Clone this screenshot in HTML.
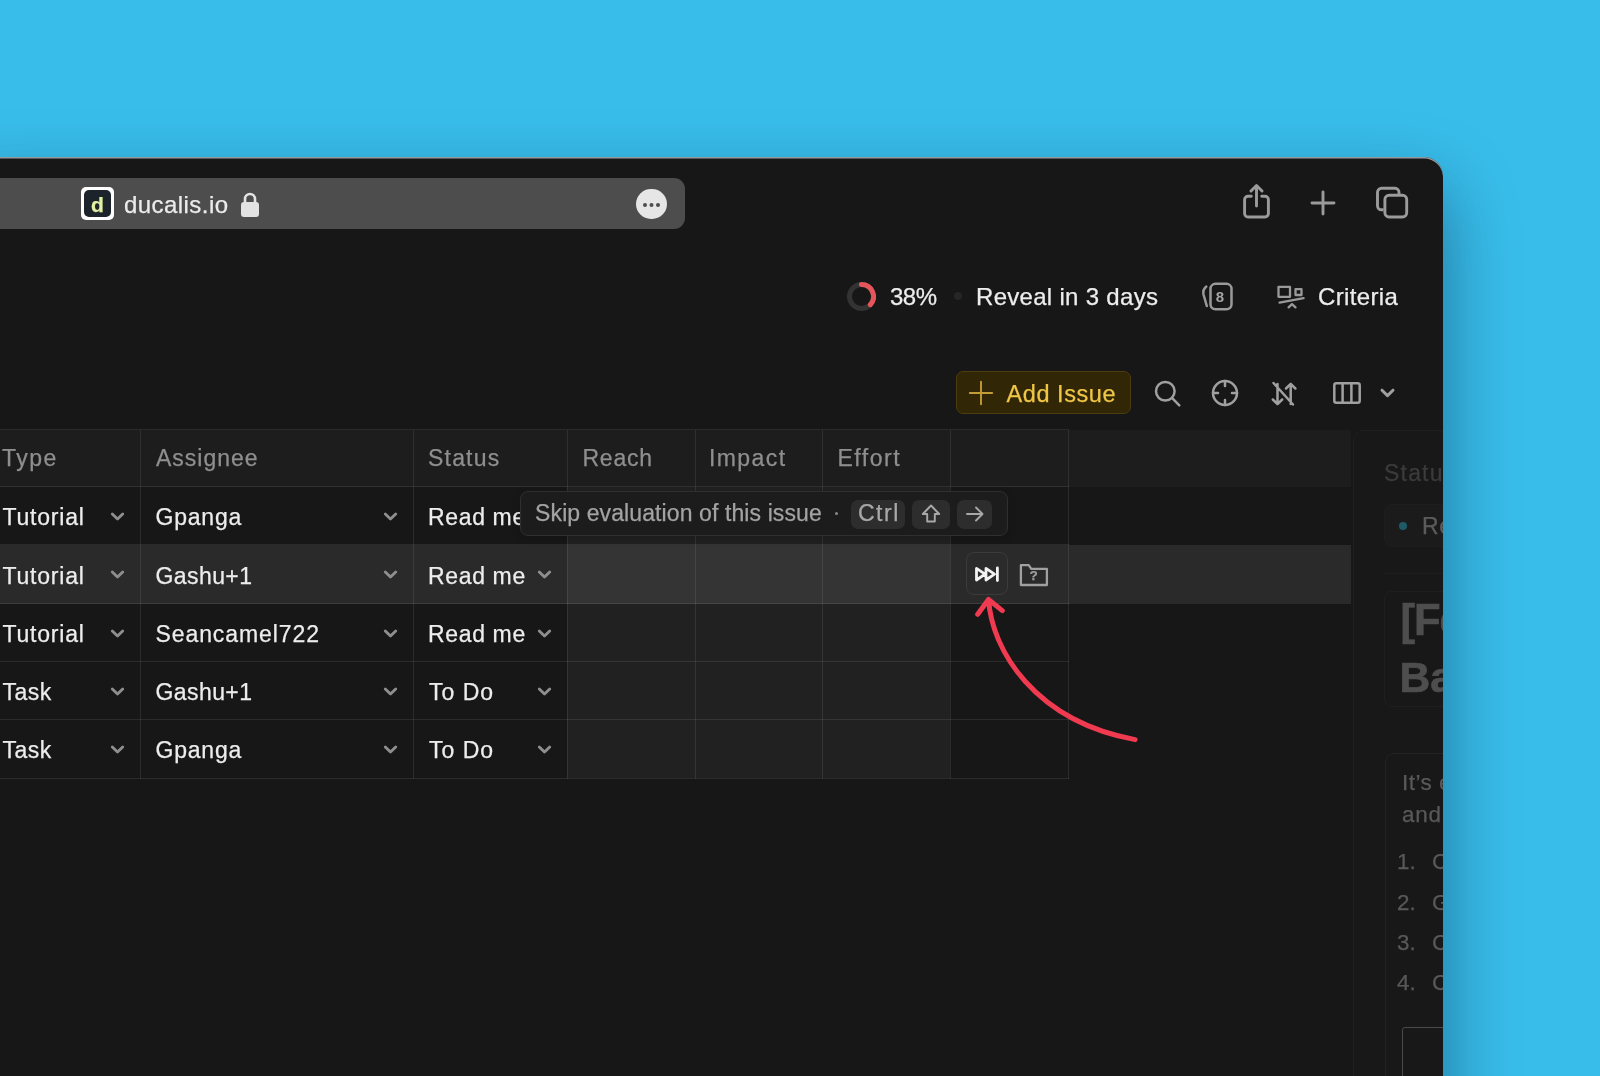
<!DOCTYPE html>
<html lang="en">
<head>
<meta charset="utf-8">
<title>Ducalis – Skip evaluation</title>
<style>
*{box-sizing:border-box;margin:0;padding:0}
html,body{width:1600px;height:1076px;overflow:hidden}
body{background:#38bdea;font-family:"Liberation Sans",Arial,sans-serif;position:relative;color:#ededed}
.abs{position:absolute}
#win{position:absolute;left:-40px;top:157px;width:1483px;height:1000px;background:#171717;border-top-right-radius:19px;
 box-shadow:0 32px 70px 2px rgba(0,20,50,.42), inset 0 1.500px 0 rgba(170,178,184,.85);overflow:hidden}
#inner{position:absolute;left:40px;top:-157px;width:1443px;height:1076px;will-change:transform}
.t{position:absolute;white-space:nowrap;line-height:1;-webkit-text-stroke:.25px currentColor}
svg{position:absolute;overflow:visible}
.th{font-size:23px;color:#8f8f8f}
.pl{font-size:22.400px;color:#595959}
.td{font-size:23px;color:#ededed}
</style>
</head>
<body>
<div id="win"><div id="inner">
<!-- URL BAR -->
<div class="abs" style="left:-20px;top:178px;width:705px;height:51px;background:#4d4d4d;border-radius:11px"></div>
<div class="abs" style="left:81px;top:187px;width:33px;height:33px;background:#fff;border-radius:5px"></div>
<div class="abs" style="left:84px;top:190px;width:27px;height:27px;background:#1d232b;border-radius:5px"></div>
<div class="t" id="fav" style="left:91px;top:193.500px;font-size:21px;font-weight:bold;color:#e3f0a3">d</div>
<div class="t" id="url" style="left:124px;top:192.600px;font-size:24px;color:#ececec;letter-spacing:0.44px">ducalis.io</div>
<svg style="left:240px;top:191px" width="20" height="27" viewBox="0 0 20 27"><path d="M5 12V8a5 5 0 0 1 10 0v4" fill="none" stroke="#e3e3e3" stroke-width="2.6"/><rect x="1" y="11" width="18" height="15" rx="3" fill="#e3e3e3"/></svg>
<div class="abs" style="left:636.400px;top:188.800px;width:30.700px;height:30.700px;border-radius:50%;background:#e6e6e6"></div>
<div class="abs" style="left:643px;top:202.5px;width:4px;height:4px;border-radius:50%;background:#4d4d4d;box-shadow:6.5px 0 0 #4d4d4d,13px 0 0 #4d4d4d"></div>
<!-- top right icons -->
<svg style="left:1240px;top:182px" width="34" height="40" viewBox="0 0 34 40" fill="none" stroke="#9b9b9b" stroke-width="2.900" stroke-linecap="round" stroke-linejoin="round"><path d="M11.300 14.200H8a3.400 3.400 0 0 0-3.400 3.400v14a3.400 3.400 0 0 0 3.400 3.400h17a3.400 3.400 0 0 0 3.400-3.400v-14a3.400 3.400 0 0 0-3.400-3.400H21.700"/><path d="M16.500 24V3.600M11 9 16.500 3.500 22 9"/></svg>
<svg style="left:1309px;top:188.600px" width="28" height="28" viewBox="0 0 28 28" fill="none" stroke="#9b9b9b" stroke-width="2.900" stroke-linecap="round"><path d="M14 3v22M3 14h22"/></svg>
<svg style="left:1375px;top:186px" width="34" height="34" viewBox="0 0 34 34" fill="none" stroke="#9b9b9b" stroke-width="2.900" stroke-linejoin="round"><path d="M8.500 23.800H6.500a4 4 0 0 1-4-4V6.300a4 4 0 0 1 4-4h13.500a4 4 0 0 1 4 4v2.200"/><rect x="9.900" y="9.200" width="21.800" height="21.800" rx="4.200" fill="#171717"/></svg>
<!-- ROW 2 : progress / reveal / criteria -->
<svg style="left:846px;top:281px" width="31" height="31" viewBox="0 0 31 31" fill="none"><circle cx="15.5" cy="15.500" r="12" stroke="#333" stroke-width="5"/><path d="M15.500 3.500A12 12 0 0 1 24.250 23.710" stroke="#e5565c" stroke-width="5" stroke-linecap="round"/></svg>
<div class="t" id="pct" style="left:890px;top:284.700px;font-size:24px;color:#ededed;letter-spacing:-0.50px">38%</div>
<div class="abs" style="left:953.500px;top:292px;width:8px;height:8px;border-radius:50%;background:#262626"></div>
<div class="t" id="rev" style="left:976px;top:284.700px;font-size:24px;color:#ededed;letter-spacing:0.30px">Reveal in 3 days</div>
<svg style="left:1200px;top:280px" width="36" height="34" viewBox="0 0 36 34" fill="none" stroke="#9a9a9a" stroke-width="2.500" stroke-linecap="round" stroke-linejoin="round"><rect x="10.500" y="3.800" width="21" height="25.500" rx="5"/><path d="M6.300 6.500C3.200 9 2.800 11 3.500 14.500L6.800 26"/></svg>
<div class="t" style="left:1215.8px;top:289.300px;font-size:15px;font-weight:bold;color:#a5a5a5;-webkit-text-stroke:0">8</div>
<svg style="left:1276px;top:284px" width="30" height="26" viewBox="0 0 30 26" fill="none" stroke="#9a9a9a" stroke-width="2.300" stroke-linecap="round" stroke-linejoin="round"><rect x="2.500" y="2.800" width="11.500" height="10"/><rect x="19.500" y="5.200" width="6" height="5.800"/><path d="M3.500 18.600 27.600 14.200M12.600 23.400 16 20.200l3.500 3.200"/></svg>
<div class="t" id="crit" style="left:1318px;top:284.700px;font-size:24px;color:#ededed;letter-spacing:0.35px">Criteria</div>
<!-- ROW 3 : toolbar -->
<div class="abs" style="left:955.500px;top:370.800px;width:175px;height:43.600px;background:#312606;border:1px solid #4d3c0e;border-radius:7px"></div>
<svg style="left:969px;top:381px" width="24" height="24" viewBox="0 0 24 24" fill="none" stroke="#c29c36" stroke-width="1.900" stroke-linecap="round"><path d="M12 .8v22.400M.8 12h22.400"/></svg>
<div class="t" id="add" style="left:1006.5px;top:383px;font-size:23.500px;color:#f0c647;letter-spacing:0.57px">Add Issue</div>
<svg style="left:1153px;top:379px" width="30" height="30" viewBox="0 0 30 30" fill="none" stroke="#a0a0a0" stroke-width="2.500" stroke-linecap="round"><circle cx="12.300" cy="12.300" r="9.300"/><path d="M19.200 19.200 26.300 26.300"/></svg>
<svg style="left:1211px;top:379px" width="28" height="28" viewBox="0 0 28 28" fill="none" stroke="#a0a0a0" stroke-width="2.500" stroke-linecap="round"><circle cx="14" cy="14" r="12"/><path d="M14 2v5M14 21v5M2 14h5M21 14h5"/></svg>
<svg style="left:1270px;top:380px" width="28" height="28" viewBox="0 0 28 28" fill="none" stroke="#a0a0a0" stroke-width="2.500" stroke-linecap="round" stroke-linejoin="round"><path d="M7.500 4v20M2.800 19.500l4.700 4.700 4.700-4.700M20.700 24V4M16 8.500l4.700-4.700 4.700 4.700M3.500 3 23 24.500"/></svg>
<svg style="left:1332px;top:381px" width="30" height="24" viewBox="0 0 30 24" fill="none" stroke="#a0a0a0" stroke-width="2.500" stroke-linejoin="round"><rect x="2.300" y="2.300" width="25.400" height="19.400" rx="2"/><path d="M10.600 2.300v19.400M19.400 2.300v19.400"/></svg>
<svg style="left:1380px;top:388px" width="15" height="10" viewBox="0 0 15 10" fill="none" stroke="#a0a0a0" stroke-width="3" stroke-linecap="round" stroke-linejoin="round"><path d="M2 2.200 7.500 7.600 13 2.200"/></svg>
<!-- TABLE -->
<div class="abs" style="left:-10px;top:429.500px;width:1361px;height:57.700px;background:#1d1d1d"></div>
<div class="abs" style="left:-10px;top:545.400px;width:1361px;height:58.400px;background:#2a2a2a"></div>
<div class="abs" style="left:567.300px;top:487.2px;width:382.700px;height:290.85px;background:rgba(255,255,255,.047)"></div>
<div class="abs" style="left:-10px;top:429.2px;width:1078.900px;height:1px;background:rgba(255,255,255,.085)"></div>
<div class="abs" style="left:-10px;top:486.2px;width:1078.900px;height:1px;background:rgba(255,255,255,.085)"></div>
<div class="abs" style="left:-10px;top:544.470px;width:1078.900px;height:1px;background:rgba(255,255,255,.085)"></div>
<div class="abs" style="left:-10px;top:602.74px;width:1078.900px;height:1px;background:rgba(255,255,255,.085)"></div>
<div class="abs" style="left:-10px;top:661.01px;width:1078.900px;height:1px;background:rgba(255,255,255,.085)"></div>
<div class="abs" style="left:-10px;top:719.28px;width:1078.900px;height:1px;background:rgba(255,255,255,.085)"></div>
<div class="abs" style="left:-10px;top:777.55px;width:1078.900px;height:1px;background:rgba(255,255,255,.085)"></div>
<div class="abs" style="left:139.9px;top:429.700px;width:1px;height:348.85px;background:rgba(255,255,255,.085)"></div>
<div class="abs" style="left:412.8px;top:429.700px;width:1px;height:348.85px;background:rgba(255,255,255,.085)"></div>
<div class="abs" style="left:566.8px;top:429.700px;width:1px;height:348.85px;background:rgba(255,255,255,.085)"></div>
<div class="abs" style="left:694.7px;top:429.700px;width:1px;height:348.85px;background:rgba(255,255,255,.085)"></div>
<div class="abs" style="left:822.2px;top:429.700px;width:1px;height:348.85px;background:rgba(255,255,255,.085)"></div>
<div class="abs" style="left:949.5px;top:429.700px;width:1px;height:348.85px;background:rgba(255,255,255,.085)"></div>
<div class="abs" style="left:1067.9px;top:429.700px;width:1px;height:348.85px;background:rgba(255,255,255,.085)"></div>
<div class="t th" style="left:2px;top:447.300px;letter-spacing:1.50px">Type</div>
<div class="t th" style="left:156px;top:447.300px;letter-spacing:1.00px">Assignee</div>
<div class="t th" style="left:428px;top:447.300px;letter-spacing:1.20px">Status</div>
<div class="t th" style="left:582.5px;top:447.300px;letter-spacing:0.75px">Reach</div>
<div class="t th" style="left:709px;top:447.300px;letter-spacing:1.40px">Impact</div>
<div class="t th" style="left:837.5px;top:447.300px;letter-spacing:1.50px">Effort</div>
<div class="t td" style="left:2.5px;top:506.28px;letter-spacing:0.79px">Tutorial</div>
<div class="t td" style="left:155.5px;top:506.28px;letter-spacing:0.80px">Gpanga</div>
<div class="t td" style="left:428px;top:506.28px;letter-spacing:0.65px">Read me</div>
<svg style="left:109.8px;top:512.2px" width="15" height="10" viewBox="0 0 15 10" fill="none" stroke="#8e8e8e" stroke-width="2.900" stroke-linecap="round" stroke-linejoin="round"><path d="M2.300 2 7.500 7 12.700 2"/></svg>
<svg style="left:382.8px;top:512.2px" width="15" height="10" viewBox="0 0 15 10" fill="none" stroke="#8e8e8e" stroke-width="2.900" stroke-linecap="round" stroke-linejoin="round"><path d="M2.300 2 7.500 7 12.700 2"/></svg>
<svg style="left:537.3px;top:512.2px" width="15" height="10" viewBox="0 0 15 10" fill="none" stroke="#8e8e8e" stroke-width="2.900" stroke-linecap="round" stroke-linejoin="round"><path d="M2.300 2 7.500 7 12.700 2"/></svg>
<div class="t td" style="left:2.5px;top:564.53px;letter-spacing:0.79px">Tutorial</div>
<div class="t td" style="left:155.5px;top:564.53px;letter-spacing:0.42px">Gashu+1</div>
<div class="t td" style="left:428px;top:564.53px;letter-spacing:0.65px">Read me</div>
<svg style="left:109.8px;top:570.45px" width="15" height="10" viewBox="0 0 15 10" fill="none" stroke="#8e8e8e" stroke-width="2.900" stroke-linecap="round" stroke-linejoin="round"><path d="M2.300 2 7.500 7 12.700 2"/></svg>
<svg style="left:382.8px;top:570.45px" width="15" height="10" viewBox="0 0 15 10" fill="none" stroke="#8e8e8e" stroke-width="2.900" stroke-linecap="round" stroke-linejoin="round"><path d="M2.300 2 7.500 7 12.700 2"/></svg>
<svg style="left:537.3px;top:570.45px" width="15" height="10" viewBox="0 0 15 10" fill="none" stroke="#8e8e8e" stroke-width="2.900" stroke-linecap="round" stroke-linejoin="round"><path d="M2.300 2 7.500 7 12.700 2"/></svg>
<div class="t td" style="left:2.5px;top:622.78px;letter-spacing:0.79px">Tutorial</div>
<div class="t td" style="left:155.5px;top:622.78px;letter-spacing:0.91px">Seancamel722</div>
<div class="t td" style="left:428px;top:622.78px;letter-spacing:0.65px">Read me</div>
<svg style="left:109.8px;top:628.7px" width="15" height="10" viewBox="0 0 15 10" fill="none" stroke="#8e8e8e" stroke-width="2.900" stroke-linecap="round" stroke-linejoin="round"><path d="M2.300 2 7.500 7 12.700 2"/></svg>
<svg style="left:382.8px;top:628.7px" width="15" height="10" viewBox="0 0 15 10" fill="none" stroke="#8e8e8e" stroke-width="2.900" stroke-linecap="round" stroke-linejoin="round"><path d="M2.300 2 7.500 7 12.700 2"/></svg>
<svg style="left:537.3px;top:628.7px" width="15" height="10" viewBox="0 0 15 10" fill="none" stroke="#8e8e8e" stroke-width="2.900" stroke-linecap="round" stroke-linejoin="round"><path d="M2.300 2 7.500 7 12.700 2"/></svg>
<div class="t td" style="left:2.5px;top:681.03px;letter-spacing:0.50px">Task</div>
<div class="t td" style="left:155.5px;top:681.03px;letter-spacing:0.42px">Gashu+1</div>
<div class="t td" style="left:429px;top:681.03px;letter-spacing:1.00px">To Do</div>
<svg style="left:109.8px;top:686.95px" width="15" height="10" viewBox="0 0 15 10" fill="none" stroke="#8e8e8e" stroke-width="2.900" stroke-linecap="round" stroke-linejoin="round"><path d="M2.300 2 7.500 7 12.700 2"/></svg>
<svg style="left:382.8px;top:686.95px" width="15" height="10" viewBox="0 0 15 10" fill="none" stroke="#8e8e8e" stroke-width="2.900" stroke-linecap="round" stroke-linejoin="round"><path d="M2.300 2 7.500 7 12.700 2"/></svg>
<svg style="left:537.3px;top:686.95px" width="15" height="10" viewBox="0 0 15 10" fill="none" stroke="#8e8e8e" stroke-width="2.900" stroke-linecap="round" stroke-linejoin="round"><path d="M2.300 2 7.500 7 12.700 2"/></svg>
<div class="t td" style="left:2.5px;top:739.28px;letter-spacing:0.50px">Task</div>
<div class="t td" style="left:155.5px;top:739.28px;letter-spacing:0.80px">Gpanga</div>
<div class="t td" style="left:429px;top:739.28px;letter-spacing:1.00px">To Do</div>
<svg style="left:109.8px;top:745.2px" width="15" height="10" viewBox="0 0 15 10" fill="none" stroke="#8e8e8e" stroke-width="2.900" stroke-linecap="round" stroke-linejoin="round"><path d="M2.300 2 7.500 7 12.700 2"/></svg>
<svg style="left:382.8px;top:745.2px" width="15" height="10" viewBox="0 0 15 10" fill="none" stroke="#8e8e8e" stroke-width="2.900" stroke-linecap="round" stroke-linejoin="round"><path d="M2.300 2 7.500 7 12.700 2"/></svg>
<svg style="left:537.3px;top:745.2px" width="15" height="10" viewBox="0 0 15 10" fill="none" stroke="#8e8e8e" stroke-width="2.900" stroke-linecap="round" stroke-linejoin="round"><path d="M2.300 2 7.500 7 12.700 2"/></svg>
<!-- row action buttons -->
<div class="abs" style="left:965.500px;top:552.300px;width:42.600px;height:43.200px;background:#2b2b2b;border:1px solid #3b3b3b;border-radius:8px"></div>
<svg style="left:973px;top:564px" width="28" height="20" viewBox="0 0 28 20" fill="none" stroke="#f2f2f2" stroke-width="2.800" stroke-linejoin="round" stroke-linecap="round"><path d="M3.500 4.400v11.600l8.500-5.800zM13 4.400v11.600l8.500-5.800zM24.400 3.900v12.600"/></svg>
<svg style="left:1019px;top:563px" width="30" height="24" viewBox="0 0 30 24" fill="none" stroke="#a0a0a0" stroke-width="2.300" stroke-linejoin="round"><path d="M1.900 2.100h7.800l2.600 3.800h15.600v16.100H1.900z"/></svg>
<div class="t" style="left:1029.5px;top:569px;font-size:13.500px;font-weight:bold;color:#a0a0a0">?</div>
<!-- tooltip -->
<div class="abs" style="left:519.800px;top:490.800px;width:488.400px;height:45.600px;background:#1c1c1c;border:1px solid #2f2f2f;border-radius:8px;box-shadow:0 3px 8px rgba(0,0,0,.15)"></div>
<div class="t" id="tip" style="left:535.1px;top:501.500px;font-size:23px;color:#a3a3a3;letter-spacing:0.10px">Skip evaluation of this issue</div>
<div class="abs" style="left:834.800px;top:511.800px;width:3.500px;height:3.500px;border-radius:50%;background:#8a8a8a"></div>
<div class="abs" style="left:851px;top:499.500px;width:54px;height:29px;background:#2d2d2d;border-radius:7px"></div>
<div class="t" id="ctrl" style="left:858px;top:501.500px;font-size:23px;color:#a8a8a8;letter-spacing:1.50px">Ctrl</div>
<div class="abs" style="left:912px;top:499.500px;width:37.500px;height:29px;background:#2d2d2d;border-radius:7px"></div>
<svg style="left:921px;top:503px" width="20" height="22" viewBox="0 0 20 22" fill="none" stroke="#a8a8a8" stroke-width="1.900" stroke-linejoin="round"><path d="M10 2.500 1.800 11h4.400v7.500h7.600V11h4.400z"/></svg>
<div class="abs" style="left:957px;top:499.500px;width:35px;height:29px;background:#2d2d2d;border-radius:7px"></div>
<svg style="left:965px;top:505px" width="20" height="18" viewBox="0 0 20 18" fill="none" stroke="#a8a8a8" stroke-width="1.900" stroke-linecap="round" stroke-linejoin="round"><path d="M2 9h15.500M11 2.500 17.500 9 11 15.500"/></svg>
<!-- red arrow -->
<svg style="left:0;top:0" width="1443" height="1076" viewBox="0 0 1443 1076" fill="none" stroke="#f03a50" stroke-width="5" stroke-linecap="round" stroke-linejoin="round"><path d="M1135.100 739.600C1034.500 721.100 991.750 649.900 988.600 599.700M977.700 614.300 988.500 599.500 1002.300 610.600"/></svg>
<!-- RIGHT PANEL (dimmed issue card) -->
<div class="abs" style="left:1353px;top:429.500px;width:200px;height:700px;background:#181818;border:1px solid #1f1f1f;border-top-left-radius:10px"></div>
<div class="t" id="pstat" style="left:1384px;top:462px;font-size:23px;color:#3b3b3b;letter-spacing:1.200px">Status</div>
<div class="abs" style="left:1384px;top:503.500px;width:200px;height:43.500px;background:#1b1b1b;border:1px solid #1e1e1e;border-radius:8px"></div>
<div class="abs" style="left:1398.500px;top:522px;width:8px;height:8px;border-radius:50%;background:#1f5a68"></div>
<div class="t" id="pre" style="left:1422px;top:514.500px;font-size:23px;color:#5c5c5c;letter-spacing:.600px">Read me</div>
<div class="abs" style="left:1384px;top:573px;width:200px;height:1px;background:#1d1d1d"></div>
<div class="abs" style="left:1384px;top:591.300px;width:200px;height:115.500px;border:1px solid #1f1f1f;border-radius:8px"></div>
<div class="t" id="ph1" style="left:1400.5px;top:599px;font-size:43.500px;font-weight:bold;color:#4e4e4e;-webkit-text-stroke:.7px #4e4e4e;letter-spacing:-1px">[Feature]</div>
<div class="t" id="ph2" style="left:1399.5px;top:656.800px;font-size:42.500px;font-weight:bold;color:#4e4e4e;-webkit-text-stroke:.7px #4e4e4e">Backlog</div>
<div class="abs" style="left:1384.500px;top:753px;width:200px;height:400px;border:1px solid #222;border-radius:9px"></div>
<div class="t" id="pp1" style="left:1402px;top:772.400px;font-size:22.500px;color:#595959;letter-spacing:.500px">It’s easy</div>
<div class="t" id="pp2" style="left:1402px;top:804.400px;font-size:22.500px;color:#595959;letter-spacing:.700px">and</div>
<div class="t pl" style="left:1397px;top:851.400px">1.</div><div class="t pl" style="left:1432px;top:851.400px">Create</div>
<div class="t pl" style="left:1397px;top:891.700px">2.</div><div class="t pl" style="left:1432px;top:891.700px">Go to</div>
<div class="t pl" style="left:1397px;top:932px">3.</div><div class="t pl" style="left:1432px;top:932px">Check</div>
<div class="t pl" style="left:1397px;top:972.300px">4.</div><div class="t pl" style="left:1432px;top:972.300px">Close</div>
<div class="abs" style="left:1401.500px;top:1027px;width:100px;height:100px;border:1px solid #4a4a4a;border-radius:3px"></div>

</div></div>
</body>
</html>
